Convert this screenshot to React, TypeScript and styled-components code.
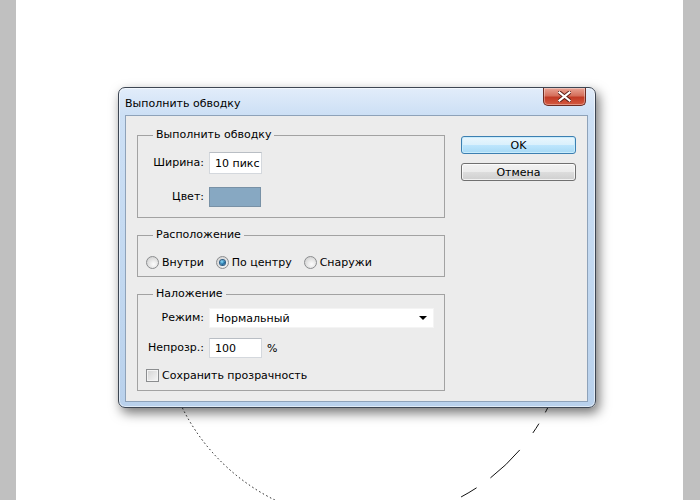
import React from "react";
import styled, { createGlobalStyle } from "styled-components";

const GlobalStyle = createGlobalStyle`
  body {
    margin: 0;
    background: #c0c0c0;
    font-family: "DejaVu Sans", "Liberation Sans", sans-serif;
    font-size: 11px;
    color: #000;
  }
`;

const Page = styled.div`
  width: 700px;
  height: 500px;
  display: flex;
  padding: 0 17px 0 16px;
  box-sizing: border-box;
  background: #c0c0c0;
  overflow: hidden;
`;

const Canvas = styled.main`
  flex: 1;
  position: relative;
  background: #fff;
  padding: 87px 0 0 102px;
`;

const Selection = styled.svg`
  position: absolute;
  left: 0;
  top: 0;
  pointer-events: none;
`;

const Window = styled.section`
  position: relative;
  z-index: 1;
  width: 478px;
  height: 321px;
  box-sizing: border-box;
  display: flex;
  flex-direction: column;
  border: 1px solid #3d4653;
  border-radius: 7px;
  background: linear-gradient(#e2edfa, #cde0f5 26px, #c2d8f0 60%, #b9d1ec);
  box-shadow: 3px 5px 12px rgba(0, 0, 0, 0.55),
    inset 0 0 0 1px rgba(255, 255, 255, 0.55);
`;

const TitleBar = styled.header`
  position: relative;
  height: 27px;
  display: flex;
  align-items: center;
  padding: 3px 0 0 6px;
  box-sizing: border-box;
  color: #000;
`;

const CloseButton = styled.div`
  position: absolute;
  top: 0;
  right: 9px;
  width: 43px;
  height: 18px;
  box-sizing: border-box;
  display: flex;
  align-items: center;
  justify-content: center;
  border: 1px solid #6c2b22;
  border-top: none;
  border-radius: 0 0 5px 5px;
  background: linear-gradient(#e9a394, #d5705c 45%, #c23b26 55%, #d45a40);
  box-shadow: inset 0 0 0 1px rgba(255, 255, 255, 0.35);
`;

const Client = styled.div`
  flex: 1;
  margin: 0 7px 5px 6px;
  border: 1px solid #8ea2b9;
  background: #ececec;
  display: flex;
  padding: 12px 0 0 11px;
`;

const LeftColumn = styled.div`
  width: 308px;
  display: flex;
  flex-direction: column;
  gap: 10px;
`;

const RightColumn = styled.div`
  margin-left: 16px;
  padding-top: 8px;
  display: flex;
  flex-direction: column;
  gap: 9px;
`;

const Group = styled.fieldset<{ $pt: number; $pb: number }>`
  margin: 0;
  min-width: 0;
  padding: ${(p) => p.$pt}px 0 ${(p) => p.$pb}px;
  border: 1px solid #a2a2a2;
`;

const Legend = styled.legend`
  margin-left: 15px;
  padding: 0 3px;
  line-height: 14px;
`;

const Fields = styled.div<{ $gap: number }>`
  display: grid;
  grid-template-columns: 66px auto;
  column-gap: 5px;
  row-gap: ${(p) => p.$gap}px;
  align-items: center;
`;

const Label = styled.span`
  text-align: right;
  line-height: 14px;
`;

const TextBox = styled.div<{ $h: number }>`
  width: 53px;
  height: ${(p) => p.$h}px;
  box-sizing: border-box;
  display: flex;
  align-items: center;
  padding-left: 5px;
  background: #fff;
  border: 1px solid #d4d8dd;
  border-top-color: #b9bec4;
`;

const Swatch = styled.div`
  width: 52px;
  height: 20px;
  box-sizing: border-box;
  background: #87a8c2;
  border: 1px solid #7891a6;
`;

const Inline = styled.div`
  display: flex;
  align-items: center;
  gap: 5px;
`;

const Dropdown = styled.div`
  width: 225px;
  height: 20px;
  box-sizing: border-box;
  display: flex;
  align-items: center;
  justify-content: space-between;
  padding: 0 6px 0 6px;
  background: #fff;
  border: 1px solid #f4f4f4;
`;

const Arrow = styled.span`
  width: 0;
  height: 0;
  border-left: 4px solid transparent;
  border-right: 4px solid transparent;
  border-top: 4px solid #000;
`;

const RadioRow = styled.div`
  display: flex;
  align-items: center;
  gap: 12px;
  padding-left: 8px;
`;

const Option = styled.label`
  display: flex;
  align-items: center;
  gap: 3px;
  line-height: 15px;
`;

const Radio = styled.span<{ $checked?: boolean }>`
  width: 13px;
  height: 13px;
  box-sizing: border-box;
  border-radius: 50%;
  border: 1px solid #8b8d8f;
  background: radial-gradient(circle at 60% 65%, #fdfdfd, #d8d8d8 70%, #c8c8c8);
  display: flex;
  align-items: center;
  justify-content: center;

  &::after {
    content: "";
    display: ${(p) => (p.$checked ? "block" : "none")};
    width: 5px;
    height: 5px;
    border-radius: 50%;
    background: radial-gradient(circle at 40% 35%, #8fe1ff, #1b6aa0 60%, #0c3f6b);
    box-shadow: 0 0 0 1px #2c5d84;
  }
`;

const CheckRow = styled.label`
  grid-column: 1 / -1;
  display: flex;
  align-items: center;
  gap: 3px;
  padding-left: 8px;
  line-height: 15px;
`;

const Checkbox = styled.span`
  width: 13px;
  height: 13px;
  box-sizing: border-box;
  border: 1px solid #8b8d8f;
  background: linear-gradient(135deg, #d3d3d3, #f6f6f6);
  box-shadow: inset 0 0 0 1px #f4f4f4;
`;

const Button = styled.button<{ $primary?: boolean }>`
  width: 115px;
  height: 18px;
  padding: 0;
  font: inherit;
  color: #000;
  border-radius: 3px;
  border: 1px solid ${(p) => (p.$primary ? "#3c7fb1" : "#707070")};
  background: ${(p) =>
    p.$primary
      ? "linear-gradient(#eaf6fd, #d9f0fc 50%, #bee6fd 50%, #a7d9f5)"
      : "linear-gradient(#f2f2f2, #ebebeb 50%, #dddddd 50%, #cfcfcf)"};
  box-shadow: inset 0 0 0 1px
    ${(p) => (p.$primary ? "#c9ecfc" : "rgba(255, 255, 255, 0.7)")};
`;

const CloseIcon = () => (
  <svg width="13" height="11" viewBox="0 0 13 11">
    <path
      d="M1.5 1.5 L11.5 9.5 M11.5 1.5 L1.5 9.5"
      stroke="#5a1c14"
      strokeWidth="4"
      strokeLinecap="square"
    />
    <path
      d="M1.5 1.5 L11.5 9.5 M11.5 1.5 L1.5 9.5"
      stroke="#fff"
      strokeWidth="2.2"
      strokeLinecap="square"
    />
  </svg>
);

// marching ants of the round selection, only the part under the dialog shows
const SelectionOutline = () => (
  <Selection width="667" height="500" viewBox="0 0 667 500">
    <path
      d="M166.4 408 A204 204 0 0 0 349 521"
      fill="none"
      stroke="#111"
      strokeWidth="1"
      strokeDasharray="1.5 2.6"
    />
    <path
      d="M531.6 408 A204 204 0 0 1 349 521"
      fill="none"
      stroke="#111"
      strokeWidth="1"
      strokeDasharray="5 13 11 21.5 40.5 17 18 30"
    />
  </Selection>
);

const App = () => {
  return (
    <Page>
      <GlobalStyle />
      <Canvas>
        <SelectionOutline />
        <Window>
          <TitleBar>
            Выполнить обводку
            <CloseButton>
              <CloseIcon />
            </CloseButton>
          </TitleBar>
          <Client>
            <LeftColumn>
              <Group $pt={10} $pb={10}>
                <Legend>Выполнить обводку</Legend>
                <Fields $gap={13}>
                  <Label>Ширина:</Label>
                  <TextBox $h={22}>10 пикс</TextBox>
                  <Label>Цвет:</Label>
                  <Swatch />
                </Fields>
              </Group>
              <Group $pt={13} $pb={6}>
                <Legend>Расположение</Legend>
                <RadioRow>
                  <Option>
                    <Radio />
                    Внутри
                  </Option>
                  <Option>
                    <Radio $checked />
                    По центру
                  </Option>
                  <Option>
                    <Radio />
                    Снаружи
                  </Option>
                </RadioRow>
              </Group>
              <Group $pt={7} $pb={7}>
                <Legend>Наложение</Legend>
                <Fields $gap={10}>
                  <Label>Режим:</Label>
                  <Dropdown>
                    Нормальный
                    <Arrow />
                  </Dropdown>
                  <Label>Непрозр.:</Label>
                  <Inline>
                    <TextBox $h={20}>100</TextBox>%
                  </Inline>
                  <CheckRow>
                    <Checkbox />
                    Сохранить прозрачность
                  </CheckRow>
                </Fields>
              </Group>
            </LeftColumn>
            <RightColumn>
              <Button $primary>OK</Button>
              <Button>Отмена</Button>
            </RightColumn>
          </Client>
        </Window>
      </Canvas>
    </Page>
  );
};

export default App;
